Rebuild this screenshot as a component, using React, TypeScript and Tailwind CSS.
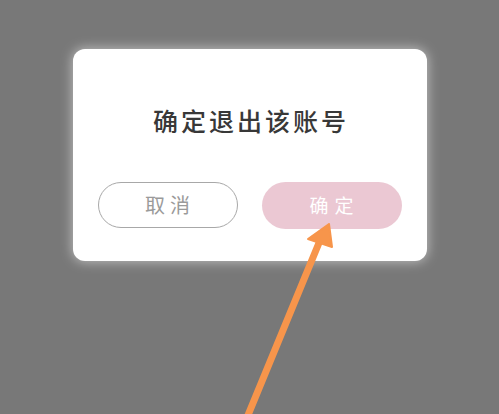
import React from 'react';

const cjk = "font-['Noto_Sans_CJK_SC','Noto_Sans',sans-serif]";

export default function App() {
  return (
    <div className={`relative min-h-screen w-full overflow-hidden bg-[#787878] pt-[49px] ${cjk}`}>
      <div className="mx-auto flex h-[212px] w-[354px] flex-col rounded-[12px] bg-white shadow-[0_0_12px_1px_rgba(255,255,255,0.5)]">
        <div className="flex h-[133px] items-center justify-center pt-[10px]">
          <h2 className="pl-[3px] text-[25px] font-medium leading-none tracking-[3px] text-[#383838]">确定退出该账号</h2>
        </div>
        <div className="flex gap-[24px] px-[25px]">
          <button className="flex h-[46px] w-[140px] items-center justify-center rounded-full border border-[#a8a8a8] text-[20px] tracking-[5px] text-[#9a9a9a]">
            <span className="pl-[5px]">取消</span>
          </button>
          <button className="flex h-[47px] w-[140px] items-center justify-center rounded-full bg-[#ebc8d3] text-[19px] tracking-[6px] text-white">
            <span className="pl-[6px]">确定</span>
          </button>
        </div>
      </div>

      {/* annotation arrow */}
      <svg className="pointer-events-none absolute inset-0" width="499" height="414" viewBox="0 0 499 414">
        <line x1="246" y1="420" x2="321" y2="238" stroke="#f7954b" strokeWidth="7" strokeLinecap="round" />
        <polygon points="329,224 308,239 332,247" fill="#f7954b" stroke="#f7954b" strokeWidth="2" strokeLinejoin="round" />
      </svg>
    </div>
  );
}
